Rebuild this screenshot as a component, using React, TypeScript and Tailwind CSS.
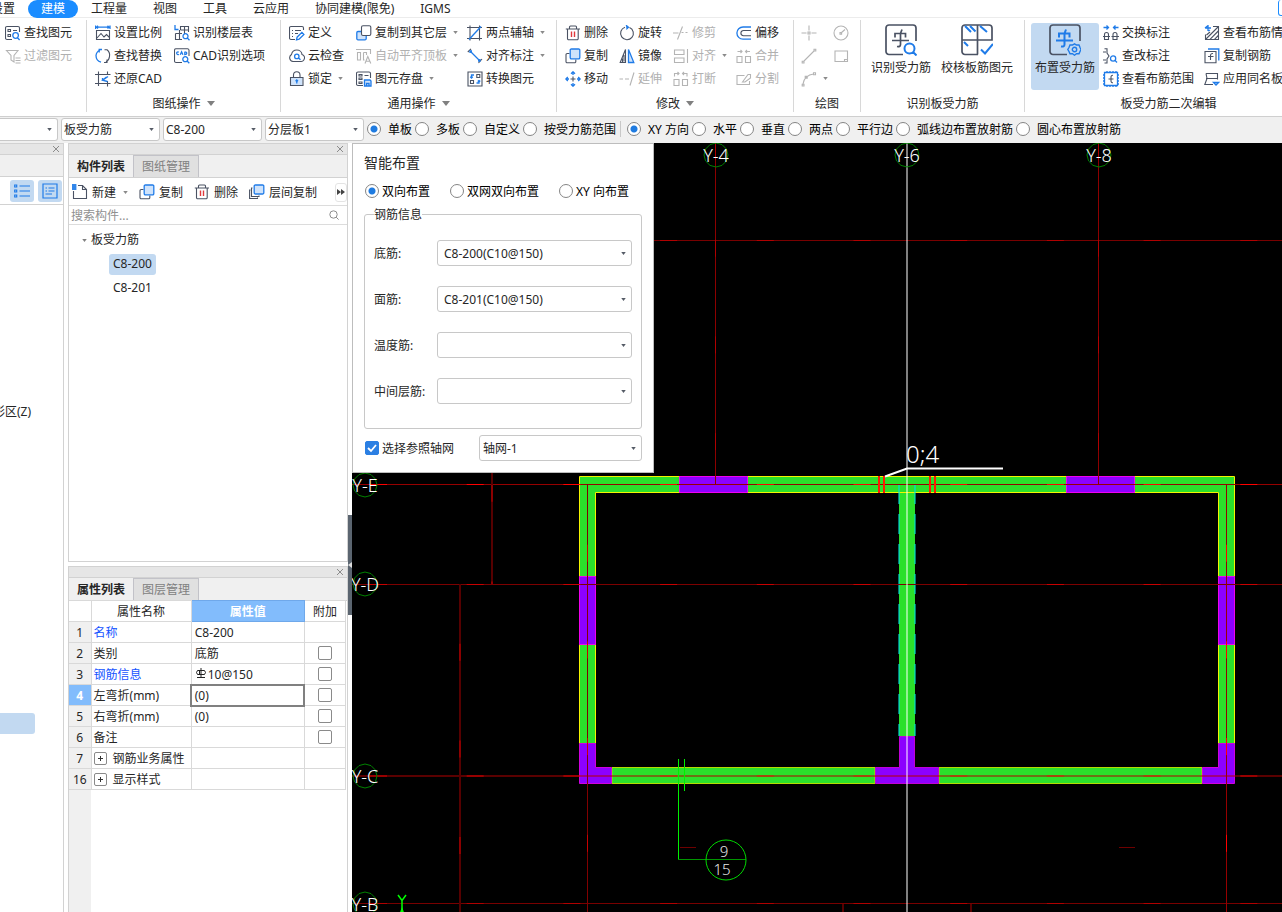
import type { ReactNode } from "react";

type Glyph = { ink?: string; accent?: string; tint?: string; red?: string };

// 16x16 line icons: dark strokes, blue strokes, light blue fill, red strokes
const glyphs: Record<string, Glyph> = {
  find: {
    ink: "M7 14.5H2A1.5 1.5 0 0 1 .5 13V3A1.5 1.5 0 0 1 2 1.5H13A1.5 1.5 0 0 1 14.5 3V7M3 4.5h2.5v2H3zM3 9.5h2.5v2H3zM8 5.5h4",
    accent: "M7.8 10.5a2.8 2.8 0 1 0 5.6 0a2.8 2.8 0 1 0-5.6 0M12.5 12.8L14.6 15",
  },
  filter: { ink: "M1.5 2.5H13L9 7.5V14L6 12V7.5zM10.5 10h5M10.5 12.5h5M10.5 15h5" },
  scale: {
    ink: "M1.5 5.5H14.5V14.5H1.5zM2 13L6 8.5L9 12L11.5 9.5L14.5 12.5",
    accent: "M.5 .5V4M15 .5V4M1 2.2H14.5M3 .8L1.5 2.2L3 3.6M12.5 .8L14 2.2L12.5 3.6",
  },
  replace: {
    ink: "M9.5 1.8H12A7 7 0 0 1 14.5 8.5A7 7 0 0 1 11 14M9 14.5h3v-3",
    accent: "M6 14.2A7 7 0 0 1 1 7.5A7 7 0 0 1 5 2M7 1.5H4.2V4.5",
  },
  restore: { ink: "M3.5 .5V15M0 3.5H15.5M12.5 .5V3.5M0 12.5H15.5M12.5 10V15.5", accent: "M13 5.5L8 9M11.5 6L7.5 9.2L12.5 10.5M7.5 7V9.2" },
  floors: {
    ink: "M6.5 5V1.5H14.5V7M6.5 5H14.5M10.5 1.5V9M1.5 8.5H8M1.5 8.5V14.5H8M5.5 5V14.5",
    accent: "M1 0V4.5H4.5M9 11.2a2.5 2.5 0 1 0 5 0a2.5 2.5 0 1 0-5 0M13.3 13L15.5 15.2",
  },
  cad: {
    ink: "M8 14.5H2A1.5 1.5 0 0 1 .5 13V2A1.5 1.5 0 0 1 2 .8H13.5A1.5 1.5 0 0 1 15 2V8",
    accent: "M4.8 4.2a1.3 1.3 0 1 0 0 2M6.3 6.8L7.6 3.8L8.9 6.8M10.8 3.8V6.5C13.4 6.5 13.4 3.8 10.8 3.8M8.8 11.2a2.5 2.5 0 1 0 5 0a2.5 2.5 0 1 0-5 0M13.1 13L15.3 15.2",
  },
  define: {
    ink: "M6 14.5H2A1.5 1.5 0 0 1 .5 13V3A1.5 1.5 0 0 1 2 1.5H13A1.5 1.5 0 0 1 14.5 3V5M3 5.5h1M6 5.5h6M3 8.5h1M6 8.5h3M3 11.5h1",
    accent: "M7.5 14.8L8.1 12.2L12.9 7.4L14.9 9.4L10.1 14.2z",
  },
  cloud: {
    ink: "M4 13.5A3.8 3.8 0 0 1 2.5 6.5C3.1 3.4 5.5 2 7.8 2C10.6 2 12.8 4 13 6.5C15.8 7.2 16.1 10 14.8 12C14.2 13 13.2 13.5 12.2 13.5z",
    accent: "M5.6 8.4a2.2 2.2 0 1 0 4.4 0a2.2 2.2 0 1 0-4.4 0M9.6 10L11.5 11.7",
  },
  lock: { ink: "M1.5 6.5H14V14.5H1.5zM4.5 6.5V4A3.2 3.2 0 0 1 11 4V6.5", tint: "M2 7H13.5V14H2z", accent: "M7.8 12.5V9M6.6 10.2L7.8 9L9 10.2" },
  copyTo: {
    ink: "M7 .8H13.3A1.5 1.5 0 0 1 14.8 2.3V9A1.5 1.5 0 0 1 13.3 10.5H7A1.5 1.5 0 0 1 5.5 9V2.3A1.5 1.5 0 0 1 7 .8",
    accent: "M5 6.5H2A1.2 1.2 0 0 0 .8 7.7V13.5A1.2 1.2 0 0 0 2 14.8H9A1.2 1.2 0 0 0 10.2 13.5V11",
    tint: "M1 7H5.5V10.5H10V14.5H1z",
  },
  copy: {
    ink: "M4.5 5.5H2.2A1.2 1.2 0 0 0 1 6.7V13.5A1.2 1.2 0 0 0 2.2 14.8H9.5A1.2 1.2 0 0 0 10.8 13.5V11.5",
    tint: "M5.5 1H14V10.5H5.5z",
    accent: "M6.5 1H13.5A1.2 1.2 0 0 1 14.8 2.2V9.5A1.2 1.2 0 0 1 13.5 10.8H6.5A1.2 1.2 0 0 1 5.2 9.5V2.2A1.2 1.2 0 0 1 6.5 1",
  },
  layers: {
    ink: "M3.5 4H2.5V12.5H10V11.5M1.5 6H.6V14.5H8.5V13.5",
    tint: "M5.5 1H14V9.5H5.5z",
    accent: "M6.5 1H13.5A1.2 1.2 0 0 1 14.8 2.2V8.7A1.2 1.2 0 0 1 13.5 10H6.5A1.2 1.2 0 0 1 5.2 8.7V2.2A1.2 1.2 0 0 1 6.5 1",
  },
  flush: { ink: "M0 1.5H14.5V6M1.5 4.5H4.5V12H1.5zM7.5 4.5H10.5V7M7.5 4.5V12H8.5M9 15.5L11.8 8.5L14.8 15.5M10 13.3H13.8" },
  save: {
    ink: "M7 14.5H2A1.5 1.5 0 0 1 .5 13V2.5A1.5 1.5 0 0 1 2 1H13A1.5 1.5 0 0 1 14.5 2.5V7M3 3.5h3v1.5H3zM3 7h3v1.5H3zM3 11h3v1.5H3zM8.5 4.5h4",
    tint: "M8.5 9H15V15H8.5z",
    accent: "M8.5 9H14L15 10V15H8.5zM10.5 15V12.5H13V15",
  },
  axis: { ink: "M3 .5V15.5M0 2.5H15M12.5 .5V15.5M0 13.5H15", accent: "M2 14.5L14 1.5" },
  dim: { ink: "M4 .8L.8 4M15 11L11.5 15", accent: "M3 3L13 13M3 5V3H5M13 11V13H11" },
  convert: {
    ink: "M1 1H15V15H1zM3.5 9.5h3v3h-3zM9.8 3.5h3v3h-3z",
    accent: "M7 4H4.5V7M3.2 5.8L4.5 7L5.8 5.8M9.5 12H12V9.5M10.7 10.6L12 9.5L13.3 10.6",
  },
  trash: { ink: "M.8 4H15M2.5 4V13.5A1.2 1.2 0 0 0 3.7 14.8H12A1.2 1.2 0 0 0 13.2 13.5V4M4.5 3.5V2A1 1 0 0 1 5.5 1H10.5A1 1 0 0 1 11.5 2V3.5", red: "M6.5 6.5V12M9.5 6.5V12" },
  move: {
    ink: "M8 5.5V10.5M5.5 8H10.5",
    accent: "M8 4V.8M6 2.8L8 .8L10 2.8M8 12V15.2M6 13.2L8 15.2L10 13.2M4 8H.8M2.8 6L.8 8L2.8 10M12 8H15.2M13.2 6L15.2 8L13.2 10",
  },
  rotate: { ink: "M6 2.2A6.4 6.4 0 1 0 10.5 2.4", accent: "M7 .2L9.5 2.2L7.3 4.4M9.5 2.2H7" },
  mirror: { ink: "M6.5 1.5V14.5H1.2zM5 7V13.5M3.5 10.5V14", tint: "M9.5 1.5V14.5H14.8z", accent: "M9.5 1.5V14.5H14.8z" },
  extend: { ink: "M.5 8H4M6 8H10M11 14.5L15 1.5" },
  trim: { ink: "M0 8H5.5M4.5 14.5L9.5 1.5M8.5 7.5H10.5M12.5 7.5H14.5" },
  align: { ink: "M1.5 2H11V6.5H1.5zM1.5 10H11V14.5H1.5zM14.5 1V15" },
  break: { ink: "M1 8.5H6V14.5H1zM9.5 8.5H14.5V14.5H9.5zM1.5 5.5V2.5H6M4.5 1L6 2.5L4.5 4M14 5.5V2.5H9.5M11 1L9.5 2.5L11 4" },
  merge: { ink: "M1 8.5H6V14.5H1zM9.5 8.5H14.5V14.5H9.5zM1.5 3.5H6M4.5 2L6 3.5L4.5 5M14 3.5H9.5M11 2L9.5 3.5L11 5" },
  offset: { ink: "M15 5.5H7.5A2.6 2.6 0 0 0 7.5 10.7H15", accent: "M15 2H7A6 6 0 0 0 7 14.2H15" },
  split: { ink: "M8.5 4.5H1V13.5H13.5V10M6.5 11L12 3.5H14.5V7L9 11z" },
  point: { ink: "M8 .5V5.5M8 10.5V15.5M.5 8H5.5M10.5 8H15.5M7 7H9V9H7z" },
  line: { ink: "M3 13L13 3M1.2 13.2h1.8v1.8H1.2zM13 1.2h1.8V3H13z" },
  arc: { ink: "M2 13C2.5 7.5 7 3.5 12.5 3M1.2 13.2h1.8v1.8H1.2zM12.5 1.7h2v2h-2zM4.2 5.2h2v2h-2z" },
  circle: { ink: "M1 8a7 7 0 1 0 14 0a7 7 0 1 0-14 0M8 8L12 4.5M7 7.5h1.6v1.6H7z" },
  rect: { ink: "M2 3H14.5V13.5H2zM11.5 13.5V11.500H14.500" },
  swap: { ink: "M1.5 9.5a2 2 0 0 1 4 0V14.5H1.5zM10 9.5a2 2 0 0 1 4 0V14.5H10zM0 11.5H7M8.5 11.5H16", accent: "M.5 2.5H5M3.5 .5L5.5 2.5L3.5 4.5M15.5 2.5H11M12.500 .5L10.500 2.5L12.500 4.5" },
  edit: { ink: "M1.5 .8H4V5L6 8L4 11V15H1.5M0 4H3M0 12H3", accent: "M7.5 10.5a2.6 2.6 0 1 0 5.2 0a2.6 2.6 0 1 0-5.2 0M12 12.4L14 14.5" },
  range: {
    ink: "M10 4.2A1.8 1.8 0 0 0 8 6V10A1.8 1.8 0 0 0 10 11.8M5.5 8H10.5",
    accent: "M1.5 1.5H14.5V14.5H1.5zM0 4H1M0 7H1M0 10H1M0 13H1M15 4H16M15 7H16M15 10H16M15 13H16M4 0V1M7 0V1M10 0V1M13 0V1M4 15V16M7 15V16M10 15V16M13 15V16",
  },
  hatch: { ink: "M9 1.5H14.5V14.5H1.500V9.5M2 14L14 2M2.5 10L6 7M6 14.3L14.3 6M10.5 14.3L14.3 10.500", accent: "M4 0V6M1 3H7M1 3L3.5 1M4 6L6 5" },
  steel: { ink: "M1 3.5H12V14.8H1zM9 5.500A2 2 0 0 0 6.500 7.5V12M4 8.5H9.500", accent: "M4 1H14.8V12.5" },
  apply: { ink: "M2 2.5H13.5V8.5M2 7.5H13.500M2 2.5L3 7.500L.8 13.5H9", accent: "M9.5 11.500H14.5L12 14z" },
  newDoc: { ink: "M6 1.5H10.5L14.5 5.5V14.5H1.5V7M10.5 1.5V5.5H14.5", accent: "M0 1H4.5M0 3H4.5M0 5H4.5M1 0V6M3 0V6" },
};

function Icon({ name, off }: { name: string; off?: boolean }) {
  const g = glyphs[name];
  return (
    <svg viewBox="0 0 16 16" className="size-4 shrink-0" fill="none" strokeWidth="1.1">
      {g.tint && <path d={g.tint} fill="#cfe3fb" />}
      {g.ink && <path d={g.ink} stroke={off ? "#b4b4b4" : "#4a5263"} />}
      {g.accent && <path d={g.accent} stroke={off ? "#b4b4b4" : "#1f7be8"} strokeWidth="1.3" />}
      {g.red && <path d={g.red} stroke="#e0383c" strokeWidth="1.4" />}
    </svg>
  );
}

function Caret({ className = "" }: { className?: string }) {
  return (
    <svg viewBox="0 0 6 4" className={`h-[3px] w-[5px] shrink-0 ${className}`}>
      <path d="M0 0H6L3 4z" fill="currentColor" />
    </svg>
  );
}

function Tool({ icon, label, off, caret }: { icon: string; label?: string; off?: boolean; caret?: boolean }) {
  return (
    <button
      disabled={off}
      aria-label={label || icon}
      className="flex h-[23px] items-center gap-[3px] whitespace-nowrap disabled:text-[#b0b0b0]"
    >
      <Icon name={icon} off={off} />
      {label}
      {caret && <Caret className="ml-[3px] text-[#8a8a8a]" />}
    </button>
  );
}

type GroupProps = { title?: string; arrow?: boolean; width: string; pad?: string; children: ReactNode };

function Group({ title, arrow, width, pad = "", children }: GroupProps) {
  return (
    <section className={`mt-0.5 mb-1 flex shrink-0 flex-col border-r border-[#d8d8d8] ${width}`}>
      <div className={`flex h-[71px] shrink-0 pt-px ${pad}`}>{children}</div>
      <div className="flex h-6 shrink-0 items-center justify-center gap-1.5">
        {title}
        {arrow && (
          <svg viewBox="0 0 8 5" className="h-[5px] w-2">
            <path d="M0 0H8L4 5z" fill="#808080" />
          </svg>
        )}
      </div>
    </section>
  );
}

function BigTool({ label, active, children }: { label: string; active?: boolean; children: ReactNode }) {
  return (
    <button
      className={`mt-0.5 flex h-[67px] shrink-0 flex-col items-center rounded-[3px] px-1 whitespace-nowrap ${active ? "bg-[#c2d9f1]" : ""}`}
    >
      <svg viewBox="0 0 32 32" className="mt-px size-8" fill="none" stroke="#4a5263" strokeWidth="1.7">
        {children}
      </svg>
      <span className="mt-[3px]">{label}</span>
    </button>
  );
}

const frame = "M18 30.5H4A3 3 0 0 1 1 27.5V4A3 3 0 0 1 4 1H28A3 3 0 0 1 31 4V17";
const rebar = "M10 13.5V9.500H20.500V13.5M7 16.500H24M17 5.5L15.500 9.500V20.5C15.5 22.500 14 22.8 12 22.500";

function Select({ value, options, className, label }: { value: string; options?: string[]; className: string; label: string }) {
  return (
    <span className={`relative flex items-center ${className}`}>
      <select
        aria-label={label}
        defaultValue={value}
        className="size-full appearance-none rounded-[3px] border border-[#c8c8c8] bg-white pr-4"
      >
        {(options || [value]).map((o) => (
          <option key={o}>{o}</option>
        ))}
      </select>
      <Caret className="pointer-events-none absolute right-1.5 text-[#555b66]" />
    </span>
  );
}

function Radio({ name, label, checked, gap }: { name: string; label: string; checked?: boolean; gap: string }) {
  return (
    <label className={`flex items-center whitespace-nowrap text-black ${gap}`}>
      <input
        type="radio"
        name={name}
        defaultChecked={checked}
        className="size-3.5 shrink-0 appearance-none rounded-full border border-[#858585] bg-white checked:bg-[radial-gradient(circle,#1f7be0_3px,#fff_4px)]"
      />
      {label}
    </label>
  );
}

function Check({ label, checked }: { label: string; checked?: boolean }) {
  return (
    <span className="relative inline-flex size-3.5">
      <input
        type="checkbox"
        id={label}
        aria-label={label}
        defaultChecked={checked}
        className="peer size-3.5 appearance-none rounded-[2px] border border-[#8a8a8a] bg-white checked:border-[#2b7fe3] checked:bg-[#2b7fe3]"
      />
      <svg viewBox="0 0 14 14" className="pointer-events-none absolute inset-0 hidden peer-checked:block" fill="none">
        <path d="M3 7L6 10L11 4" stroke="#fff" strokeWidth="1.8" />
      </svg>
    </span>
  );
}

function PanelBar() {
  return (
    <div className="flex h-3 shrink-0 items-center justify-end border-y border-[#d2d2d2] bg-[#e6e6e6] pr-[3px]">
      <button aria-label="关闭">
        <svg viewBox="0 0 8 8" className="size-2" stroke="#8c8c8c">
          <path d="M1 1L7 7M7 1L1 7" />
        </svg>
      </button>
    </div>
  );
}

function Tabs({ names }: { names: string[] }) {
  return (
    <div className="flex h-[23px] shrink-0 border-b border-[#d2d2d2] bg-[#f0f0f0]">
      <button className="w-16 font-bold">{names[0]}</button>
      <button className="w-[66px] border border-b-0 border-[#c2c2c8] bg-[#e0e0e0] text-[#808080]">{names[1]}</button>
    </div>
  );
}

const menus = ["工程量", "视图", "工具", "云应用", "协同建模(限免)", "IGMS"];

function MenuBar() {
  return (
    <nav className="flex h-[18px] shrink-0 border-b border-[#ececec]">
      <a href="#axis" className="flex w-7 justify-end overflow-hidden pr-[13px] whitespace-nowrap">设置</a>
      <a href="#model" className="h-[18px] rounded-full bg-[#1a8cff] px-[13px] text-white">建模</a>
      {menus.map((m) => (
        <a key={m} href="#menu" className="px-[13px]">{m}</a>
      ))}
      <div className="-mr-3 ml-auto h-4 w-4 rounded-[3px] border border-t-0 border-[#1a8cff]" />
    </nav>
  );
}

function Ribbon() {
  return (
    <div className="flex h-[99px] shrink-0 overflow-hidden border-b border-[#cfcfcf]">
      <Group width="w-[87px]" pad="pl-[5px]">
        <div>
          <Tool icon="find" label="查找图元" />
          <Tool icon="filter" label="过滤图元" off />
        </div>
      </Group>
      <Group title="图纸操作" arrow width="w-[194px]" pad="pl-2">
        <div className="w-[79px]">
          <Tool icon="scale" label="设置比例" />
          <Tool icon="replace" label="查找替换" />
          <Tool icon="restore" label="还原CAD" />
        </div>
        <div>
          <Tool icon="floors" label="识别楼层表" />
          <Tool icon="cad" label="CAD识别选项" />
        </div>
      </Group>
      <Group title="通用操作" arrow width="w-[276px]" pad="pl-2">
        <div className="w-[67px]">
          <Tool icon="define" label="定义" />
          <Tool icon="cloud" label="云检查" />
          <Tool icon="lock" label="锁定" caret />
        </div>
        <div className="w-[111px]">
          <Tool icon="copyTo" label="复制到其它层" caret />
          <Tool icon="flush" label="自动平齐顶板" off caret />
          <Tool icon="save" label="图元存盘" caret />
        </div>
        <div>
          <Tool icon="axis" label="两点辅轴" caret />
          <Tool icon="dim" label="对齐标注" caret />
          <Tool icon="convert" label="转换图元" />
        </div>
      </Group>
      <Group title="修改" arrow width="w-[237px]" pad="pl-2">
        <div className="w-[54px]">
          <Tool icon="trash" label="删除" />
          <Tool icon="copy" label="复制" />
          <Tool icon="move" label="移动" />
        </div>
        <div className="w-[54px]">
          <Tool icon="rotate" label="旋转" />
          <Tool icon="mirror" label="镜像" />
          <Tool icon="extend" label="延伸" off />
        </div>
        <div className="w-[63px]">
          <Tool icon="trim" label="修剪" off />
          <Tool icon="align" label="对齐" off caret />
          <Tool icon="break" label="打断" off />
        </div>
        <div>
          <Tool icon="offset" label="偏移" />
          <Tool icon="merge" label="合并" off />
          <Tool icon="split" label="分割" off />
        </div>
      </Group>
      <Group title="绘图" width="w-[67px]" pad="pl-[7px]">
        <div className="w-8">
          <Tool icon="point" off />
          <Tool icon="line" off />
          <Tool icon="arc" off caret />
        </div>
        <div>
          <Tool icon="circle" off />
          <Tool icon="rect" off />
        </div>
      </Group>
      <Group title="识别板受力筋" width="w-[164px]" pad="gap-0.5 pl-1.5">
        <BigTool label="识别受力筋">
          <path d={frame} />
          <path d={rebar} />
          <path d="M19.500 24.5a5 5 0 1 0 10 0a5 5 0 1 0-10 0M28 28L31.5 31.5" stroke="#1f7be8" strokeWidth="2" />
        </BigTool>
        <BigTool label="校核板筋图元">
          <path d="M17 30.5H4A3 3 0 0 1 1 27.5V4A3 3 0 0 1 4 1H28A3 3 0 0 1 31 4V16H1M16.5 1V30.5" />
          <path d="M4 2L10 8M9 2L14.500 7.5M19 2L26 8M3 18L7 22M20 25.500L24 29.500L32 20" stroke="#1f7be8" strokeWidth="2" />
        </BigTool>
      </Group>
      <Group title="板受力筋二次编辑" width="w-[288px]" pad="pl-1.5">
        <BigTool label="布置受力筋" active>
          <path d={frame} />
          <path d={rebar} stroke="#1f7be8" strokeWidth="2" />
          <path
            d="M25.500 19.8L27.500 21H30L31 23.500L32 25.500L31 27.5L30 29.8H27.5L25.500 31.200L23.5 29.8H21L20 27.5L18.8 25.5L20 23.5L21 21H23.500zM23.3 25.5a2.2 2.2 0 1 0 4.4 0a2.2 2.2 0 1 0-4.4 0"
            stroke="#1f7be8"
            strokeWidth="1.4"
          />
        </BigTool>
        <div className="w-[105px] shrink-0 pl-1">
          <Tool icon="swap" label="交换标注" />
          <Tool icon="edit" label="查改标注" />
          <Tool icon="range" label="查看布筋范围" />
        </div>
        <div>
          <Tool icon="hatch" label="查看布筋情况" />
          <Tool icon="steel" label="复制钢筋" />
          <Tool icon="apply" label="应用同名板" />
        </div>
      </Group>
    </div>
  );
}

const scopes = ["单板", "多板", "自定义", "按受力筋范围"];
const modes = ["XY 方向", "水平", "垂直", "两点", "平行边", "弧线边布置放射筋", "圆心布置放射筋"];

function OptionBar() {
  return (
    <div className="flex h-[26px] shrink-0 items-center gap-[3px] overflow-hidden bg-[#f0f0f0] pb-0.5">
      <Select label="楼层" value="" className="h-[23px] w-[58px] [&>select]:rounded-l-none [&>select]:border-l-0" />
      <Select label="构件类型" value="板受力筋" className="h-[23px] w-[99px] [&>select]:pl-[2px]" />
      <Select label="构件" value="C8-200" className="h-[23px] w-[99px] [&>select]:pl-[2px]" />
      <Select label="分层" value="分层板1" className="h-[23px] w-[99px] [&>select]:pl-[2px]" />
      {scopes.map((s, i) => (
        <Radio key={s} name="scope" label={s} checked={i === 0} gap="gap-[7px]" />
      ))}
      <div className="mr-[3px] ml-px h-4 w-px bg-[#c8c8c8]" />
      {modes.map((m, i) => (
        <Radio key={m} name="mode" label={m} checked={i === 0} gap="gap-[7px]" />
      ))}
    </div>
  );
}

function SidePanel() {
  return (
    <aside className="flex w-16 shrink-0 flex-col overflow-hidden border-r border-[#d2d2d2]">
      <PanelBar />
      <div className="h-[22px] shrink-0 border-b border-[#d2d2d2] bg-[#f0f0f0]" />
      <div className="flex h-7 shrink-0 items-center justify-end gap-1 border-b border-[#d2d2d2] pr-px">
        <button aria-label="列表" className="flex h-[22px] w-6 items-center justify-center rounded-[3px] bg-[#c2d9f1]">
          <svg viewBox="0 0 16 14" className="h-3.5 w-4" stroke="#1f7be8" fill="none" strokeWidth="1.2">
            <path d="M5.5 2H16M5.5 7H16M5.5 12H16M.7 1h2v2h-2zM.7 6h2v2h-2zM.7 11h2v2h-2z" />
          </svg>
        </button>
        <button aria-label="详情" className="flex h-[22px] w-6 items-center justify-center rounded-[3px] bg-[#c2d9f1]">
          <svg viewBox="0 0 16 16" className="size-4" stroke="#1f7be8" fill="none" strokeWidth="1.2">
            <path d="M1 1H15V15H1zM3.5 5H5M6.5 5H12.5M3.5 8H5M6.5 8H12.5M3.5 11H10" />
          </svg>
        </button>
      </div>
      <div className="mt-[198px] flex w-[31px] justify-end whitespace-nowrap">矩形区(Z)</div>
      <div className="mt-[293px] h-[21px] w-[35px] rounded-r-[3px] bg-[#c2d9f1]" />
    </aside>
  );
}

const props = [
  { no: 1, name: "名称", value: "C8-200", link: true },
  { no: 2, name: "类别", value: "底筋", extra: true },
  { no: 3, name: "钢筋信息", value: "10@150", link: true, extra: true, bar: true },
  { no: 4, name: "左弯折(mm)", value: "(0)", extra: true, active: true },
  { no: 5, name: "右弯折(mm)", value: "(0)", extra: true },
  { no: 6, name: "备注", value: "", extra: true },
  { no: 7, name: "钢筋业务属性", value: "", group: true },
  { no: 16, name: "显示样式", value: "", group: true },
];

function PropertyTable() {
  return (
    <table className="-mt-px w-[277px] table-fixed border-collapse [&_td]:border [&_td]:border-[#d9d9d9] [&_th]:border [&_th]:border-[#d9d9d9]">
      <thead>
        <tr className="h-[21px]">
          <th className="w-[22px] border-l-0!" />
          <th className="w-[100px] p-0 font-normal">属性名称</th>
          <th className="w-[113px] border-[#6fa8ea]! bg-[#82bcfc] p-0 font-bold text-white">属性值</th>
          <th className="w-[41px] p-0 font-normal">附加</th>
        </tr>
      </thead>
      <tbody>
        {props.map((p) => (
          <tr key={p.no} className="h-[21px]">
            <td className={`border-l-0! p-0 text-center ${p.active ? "bg-[#82bcfc] font-bold text-white" : "bg-[#f0f0f0]"}`}>{p.no}</td>
            <td className={`p-0 pl-[2px] whitespace-nowrap ${p.link ? "text-[#1453ff]" : ""}`}>
              {p.group ? (
                <span className="flex items-center gap-1.5">
                  <button aria-label="展开" className="flex size-[13px] items-center justify-center rounded-[2px] border border-[#8a8a8a]">
                    <svg viewBox="0 0 5 5" className="size-[5px]" stroke="#333">
                      <path d="M2.5 0V5M0 2.5H5" />
                    </svg>
                  </button>
                  {p.name}
                </span>
              ) : (
                p.name
              )}
            </td>
            <td className={`p-0 pl-[3px] ${p.active ? "outline-2 -outline-offset-1 outline-[#808080]" : ""}`}>
              <span className="flex items-center gap-px">
                {p.bar && (
                  <svg viewBox="0 0 12 12" className="size-3" stroke="#222" fill="none">
                    <path d="M6 0V10M2.500 2.5H9.5M2.500 2.5L1.500 4.500L2.500 6.500M9.500 2.5L10.500 4.500L9.500 6.500M2.500 6.500H9.500M2 9.500H10M4.500 2.5V6.500" />
                  </svg>
                )}
                {p.value}
              </span>
            </td>
            <td className="p-0">
              <span className="flex justify-center">{p.extra && <Check label={`附加-${p.name}`} />}</span>
            </td>
          </tr>
        ))}
      </tbody>
    </table>
  );
}

function ComponentPanel() {
  return (
    <aside className="ml-1 flex w-[280px] shrink-0 flex-col">
      <div className="flex h-[419px] shrink-0 flex-col border border-t-0 border-[#d2d2d2]">
        <PanelBar />
        <Tabs names={["构件列表", "图纸管理"]} />
        <div className="flex h-7 shrink-0 items-center gap-[11px] border-b border-[#dcdcdc] pt-px pl-[3px] whitespace-nowrap">
          <button className="flex items-center gap-1"><Icon name="newDoc" />新建<Caret className="ml-[3px] text-[#8a8a8a]" /></button>
          <button className="flex items-center gap-1"><Icon name="copy" />复制</button>
          <button className="flex items-center gap-1"><Icon name="trash" />删除</button>
          <button className="flex items-center gap-1"><Icon name="layers" />层间复制</button>
          <button aria-label="更多" className="ml-auto flex h-[19px] w-3 items-center justify-center rounded-[3px] border border-[#e4e4e4]">
            <svg viewBox="0 0 8 6" className="h-1.5 w-2 shrink-0" fill="#444">
              <path d="M0 0L4 3L0 6zM4 0L8 3L4 6z" />
            </svg>
          </button>
        </div>
        <div className="flex h-[19px] shrink-0 items-center border-b border-[#dcdcdc] pr-2">
          <input placeholder="搜索构件..." aria-label="搜索构件" className="min-w-0 flex-1 pl-[2px] placeholder:text-[#909090]" />
          <svg viewBox="0 0 10 10" className="size-2.5" stroke="#8c8c8c" fill="none">
            <path d="M.8 4.5a3.7 3.7 0 1 0 7.4 0a3.7 3.7 0 1 0-7.4 0M7.2 7.2L9.6 9.6" />
          </svg>
        </div>
        <ul className="pt-[3px] leading-6">
          <li className="flex items-center gap-1 pl-[13px]">
            <Caret className="text-[#808080]" />
            板受力筋
          </li>
          <li className="flex h-6 items-center pl-10">
            <span className="flex h-[21px] items-center rounded-[3px] bg-[#c2d9f1] px-1">C8-200</span>
          </li>
          <li className="flex h-6 items-center pl-11">C8-201</li>
        </ul>
      </div>
      <div className="mt-1 flex min-h-0 flex-1 flex-col border-x border-[#d2d2d2]">
        <PanelBar />
        <Tabs names={["属性列表", "图层管理"]} />
        <PropertyTable />
        <div className="w-[22px] flex-1 bg-[#f0f0f0]" />
      </div>
    </aside>
  );
}

const bars = [
  { label: "底筋:", value: "C8-200(C10@150)" },
  { label: "面筋:", value: "C8-201(C10@150)" },
  { label: "温度筋:", value: "" },
  { label: "中间层筋:", value: "" },
];

function LayoutDialog() {
  return (
    <form className="absolute top-0 left-0 flex w-[302px] flex-col border border-[#bdbdbd] bg-white px-[11px] pt-[9px] pb-[11px]">
      <h2 className="text-sm leading-5">智能布置</h2>
      <div className="mt-2 flex h-5 items-center gap-5 pl-px">
        <Radio name="layout" label="双向布置" checked gap="gap-[3px]" />
        <Radio name="layout" label="双网双向布置" gap="gap-[3px]" />
        <Radio name="layout" label="XY 向布置" gap="gap-[3px]" />
      </div>
      <fieldset className="mt-[5px] flex h-[223px] flex-col gap-5 rounded-[3px] border border-[#c8c8c8] px-[9px] pt-[17px]">
        <legend>钢筋信息</legend>
        {bars.map((b) => (
          <div key={b.label} className="flex h-[26px] shrink-0 items-center justify-between">
            <span>{b.label}</span>
            <Select label={b.label} value={b.value} className="h-[26px] w-[195px] [&>select]:pl-1.5" />
          </div>
        ))}
      </fieldset>
      <div className="mt-1.5 flex items-center pl-px">
        <Check label="选择参照轴网" checked />
        <label htmlFor="选择参照轴网" className="ml-[3px]">选择参照轴网</label>
        <Select label="轴网" value="轴网-1" className="ml-auto h-[26px] w-[163px] [&>select]:pl-[3px]" />
      </div>
    </form>
  );
}

const rows = [
  { y: 97.5, width: 1, base: "#780000", lit: "#b00000" },
  { y: 341.5, width: 1, base: "#960000", lit: "#ff0000" },
  { y: 441.5, width: 1, base: "#7c0000", lit: "#c80000" },
  { y: 633, width: 2, base: "#b4000080", lit: "#ff000060" },
  { y: 760.5, width: 1, base: "#780000", lit: "#b00000" },
];

const columns = [
  { x: 363.5, from: 0, to: 342, width: 1, base: "#8c0000", lit: "#b00000", shift: 0 },
  { x: 746.5, from: 0, to: 342, width: 1, base: "#8c0000", lit: "#b00000", shift: 0 },
  { x: 235.5, from: 341, to: 2000, width: 1, base: "#820000", lit: "#c80000", shift: 36 },
  { x: 874.5, from: 341, to: 2000, width: 1, base: "#960000", lit: "#ff0000", shift: 36 },
  { x: 140, from: 320, to: 441, width: 2, base: "#560000", lit: "#8c0000", shift: 75 },
  { x: 108, from: 441, to: 2000, width: 2, base: "#560000", lit: "#8c0000", shift: 37 },
  { x: 491, from: 761, to: 2000, width: 2, base: "#560000", lit: "#560000", shift: 0 },
  { x: 619, from: 761, to: 2000, width: 2, base: "#560000", lit: "#560000", shift: 0 },
];

const bubbles = [
  { x: 364, y: 12, text: "Y-4" },
  { x: 555, y: 12, text: "Y-6" },
  { x: 747, y: 12, text: "Y-8" },
  { x: 13, y: 342, text: "Y-E" },
  { x: 13, y: 441, text: "Y-D" },
  { x: 13, y: 633, text: "Y-C" },
  { x: 13, y: 761, text: "Y-B" },
];

function Drawing() {
  return (
    <svg className="size-full bg-black" fill="none" fontFamily="'Noto Sans', sans-serif" fontWeight="300">
      {/* walls */}
      <g fill="#2be02b" stroke="#f4f400">
        <path d="M227.5 433.5V333.5H882.5V433.5H866.5V349.5H243.5V433.5z" />
        <path d="M227.5 501.5H243.5V600.5H227.5zM866.5 501.5H882.5V600.5H866.5z" />
        <path d="M260 624.5H523V640.5H260zM587 624.5H850V640.5H587z" stroke="#b4dc00" />
      </g>
      <path d="M547 350H563V593H547z" fill="#2be02b" />
      <path d="M547 341V593M563 341V593" stroke="#00e0e0" strokeOpacity=".55" strokeDasharray="20 10" strokeWidth="2" />
      {/* columns */}
      <g fill="#8c00ff" stroke="#f000f0">
        <path d="M327.5 333.5H395.5V349.5H327.5zM714.5 333.5H782.5V349.5H714.5z" />
        <path d="M227.5 433.5H243.5V501.5H227.5zM866.5 433.5H882.5V501.5H866.5z" />
        <path d="M227.5 600.5H243.5V624.5H259.5V640.5H227.5zM882.5 600.5H866.5V624.5H850.5V640.5H882.5z" stroke="#d000e0" />
        <path d="M547.5 593.5H562.5V624.5H586.5V640.5H523.5V624.5H547.5z" stroke="#c000d8" />
      </g>
      {rows.map((r) => (
        <g key={r.y} strokeWidth={r.width}>
          <path d={`M0 ${r.y}H3000`} stroke={r.base} />
          <path d={`M18 ${r.y}H3000`} stroke={r.lit} strokeDasharray="17 79.7" />
        </g>
      ))}
      {columns.map((c) => (
        <g key={c.x} strokeWidth={c.width}>
          <path d={`M${c.x} ${c.from}V${c.to}`} stroke={c.base} />
          <path d={`M${c.x} ${c.from}V${c.to}`} stroke={c.lit} strokeDasharray="17 79.7" strokeDashoffset={c.shift} />
        </g>
      ))}
      <path d="M328 704.5H344M767 704.5H783" stroke="#6e0000" />
      <path d="M527 333V350M532 333V350M578 333V350M583 333V350" stroke="#ff1a00" strokeWidth="2" />
      <path d="M555 0V3000" stroke="#fff" strokeOpacity=".5" strokeWidth="2" />
      {/* rebar mark */}
      <path d="M533 333.5L555 325.5H651" stroke="#fff" strokeWidth="2" />
      <text x="554" y="320" fontSize="24" fill="#fff">0;4</text>
      {/* section mark */}
      <path d="M326.5 616V717M332.5 616V648" stroke="#00f000" />
      <path d="M326 716.5H394" stroke="#009600" />
      <circle cx="374" cy="717" r="20" stroke="#00d800" />
      <g fill="#e8e8e8" fontSize="15" textAnchor="middle">
        <text x="372" y="714">9</text>
        <text x="370" y="732">15</text>
      </g>
      {bubbles.map((b) => (
        <g key={b.text}>
          <path
            d="M0-12L6-10.4L10.4-6L12 0L10.4 6L6 10.4L0 12L-6 10.4L-10.4 6L-12 0L-10.4-6L-6-10.4z"
            transform={`translate(${b.x} ${b.y})`}
            stroke="#008200"
          />
          <text x={b.x} y={b.y + 7} fontSize="18" fill="#fff" textAnchor="middle">{b.text}</text>
        </g>
      ))}
      <path d="M46 752L50 757.5L54 752M50 757.5V769" stroke="#0f0" strokeWidth="1.5" />
      <path d="M50 764L53 772H47z" fill="#0f0" />
    </svg>
  );
}

export default function App() {
  return (
    <div className="flex h-screen flex-col overflow-hidden bg-white text-xs leading-[17px] text-[#262626] [font-family:'Noto_Sans','Noto_Sans_CJK_SC',sans-serif]">
      <MenuBar />
      <Ribbon />
      <OptionBar />
      <div className="flex min-h-0 flex-1">
        <SidePanel />
        <ComponentPanel />
        <div className="w-1 shrink-0 pt-[372px]">
          <button aria-label="收起" className="flex h-[100px] w-1 items-center bg-[#5b6570]">
            <svg viewBox="0 0 4 6" className="h-1.5 w-1" fill="#ddd">
              <path d="M4 0V6L0 3z" />
            </svg>
          </button>
        </div>
        <main className="relative min-w-0 flex-1 overflow-hidden bg-black">
          <Drawing />
          <LayoutDialog />
        </main>
      </div>
    </div>
  );
}
